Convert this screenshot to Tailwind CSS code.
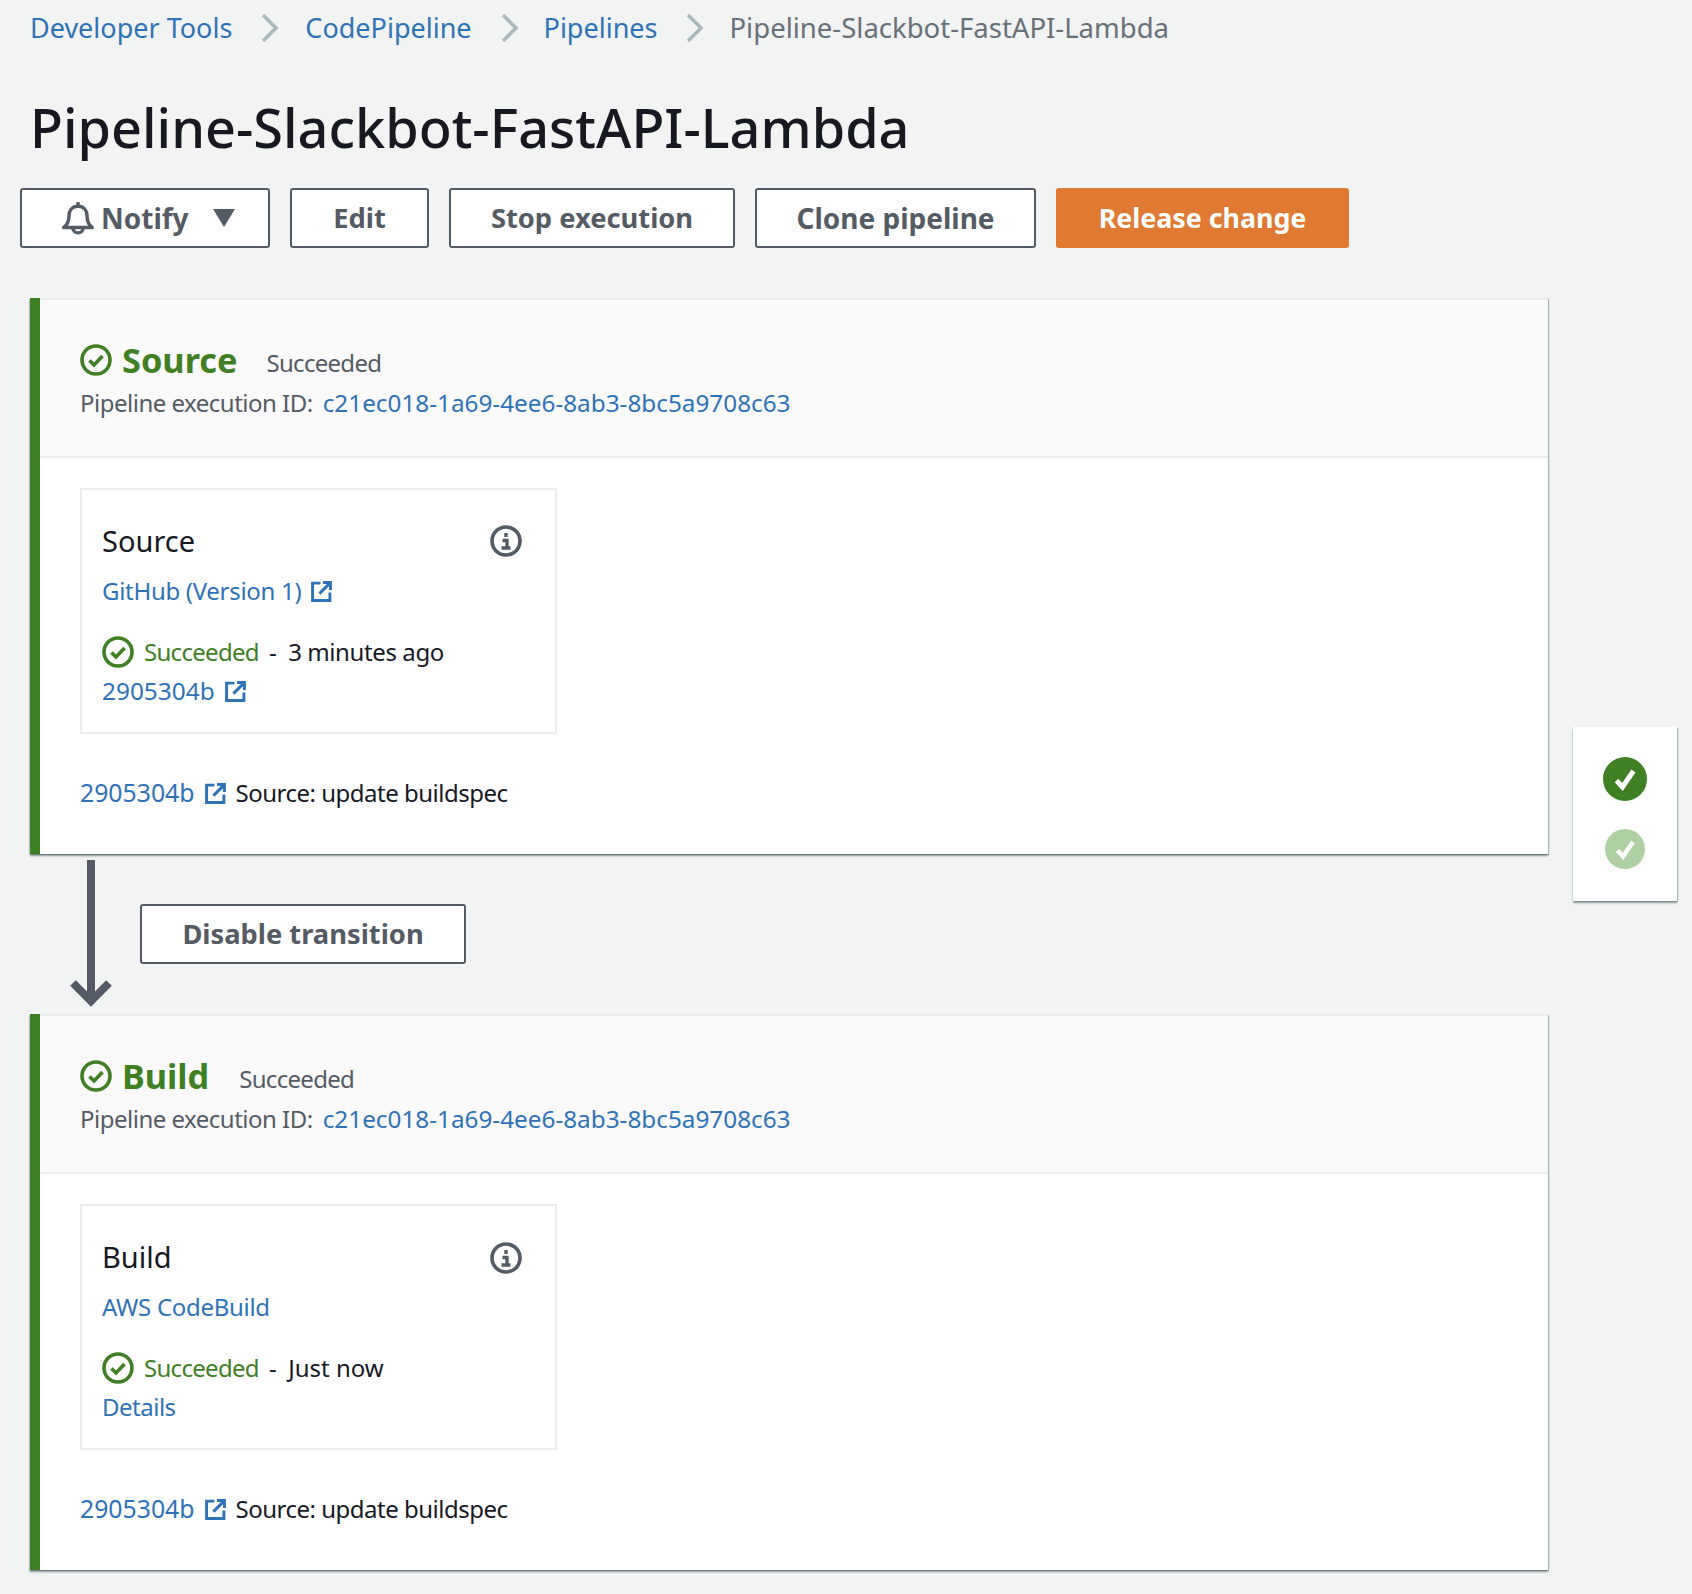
<!DOCTYPE html>
<html lang="en">
<head>
  <meta charset="UTF-8" />
  <title>Pipeline-Slackbot-FastAPI-Lambda</title>
  <script src="https://cdn.jsdelivr.net/npm/@tailwindcss/browser@4"></script>
</head>
<body class="bg-[#f2f3f3] font-['Noto_Sans',sans-serif] text-[#16191f]">
  <div class="w-[1692px] h-[1594px] overflow-hidden">
    <!-- breadcrumbs -->
    <nav class="h-14 pl-[30px] flex items-center text-[27px] text-[#2e73b8]">
      <a>Developer Tools</a>
      <svg class="ml-[29px] mr-[26px] w-[18px] h-[30px]" viewBox="0 0 18 30" fill="none" stroke="#aab7b8" stroke-width="3.5"><path d="M2 2l13 13L2 28"/></svg>
      <a>CodePipeline</a>
      <svg class="ml-[29px] mr-[25px] w-[18px] h-[30px]" viewBox="0 0 18 30" fill="none" stroke="#aab7b8" stroke-width="3.5"><path d="M2 2l13 13L2 28"/></svg>
      <a>Pipelines</a>
      <svg class="ml-[29px] mr-[25px] w-[18px] h-[30px]" viewBox="0 0 18 30" fill="none" stroke="#aab7b8" stroke-width="3.5"><path d="M2 2l13 13L2 28"/></svg>
      <span class="text-[27.5px] text-[#687078]">Pipeline-Slackbot-FastAPI-Lambda</span>
    </nav>

    <h1 class="mt-[36px] pl-[30px] h-[70px] leading-[70px] text-[54px] font-medium">Pipeline-Slackbot-FastAPI-Lambda</h1>

    <!-- actions -->
    <div class="mt-[26px] pl-5 flex gap-5 text-[27.3px] font-bold text-[#545b64]">
      <button class="w-[250px] h-[60px] bg-white border-2 border-[#545b64] rounded-[3px] flex items-center pl-[39px]">
        <svg class="w-[34px] h-[34px]" viewBox="0 0 32 32" fill="none" stroke="#545b64" stroke-width="3.2" stroke-linejoin="round"><path d="M2.5 25c4-3 5-7 5-11 0-5 3-9 8.500-9s8.500 4 8.500 9c0 4 1 8 5 11z"/><path d="M16 5V1"/><path d="M11 25a5 5 0 0 0 10 0"/></svg>
        <span class="ml-[6px] text-[28px]">Notify</span>
        <svg class="ml-[24px] w-[22px] h-[18px]" viewBox="0 0 22 18" fill="#545b64"><path d="M0 0h22L11 18z"/></svg>
      </button>
      <button class="w-[139px] h-[60px] bg-white border-2 border-[#545b64] rounded-[3px]">Edit</button>
      <button class="w-[286px] h-[60px] bg-white border-2 border-[#545b64] rounded-[3px]">Stop execution</button>
      <button class="w-[281px] h-[60px] bg-white border-2 border-[#545b64] rounded-[3px] text-[28px]">Clone pipeline</button>
      <button class="w-[293px] h-[60px] bg-[#e07a32] rounded-[3px] text-white text-[26.800px]">Release change</button>
    </div>

    <div class="mt-[50px] flex items-start">
      <div class="ml-[30px] w-[1518px]">
        <!-- source stage -->
        <section class="h-[556px] flex bg-white shadow-[0_2px_2px_0_rgba(0,28,36,0.4),1px_1px_1px_0_rgba(0,28,36,0.2),-1px_1px_1px_0_rgba(0,28,36,0.1)]">
          <div class="w-2.5 bg-[#3f8024]"></div>
          <div class="flex-1">
            <header class="h-[160px] pl-[40px] pt-[38px] bg-[#fafafa] border-t-2 border-b-2 border-[#eaeded] text-[24px] tracking-[-0.5px] text-[#545b64]">
              <div class="h-11 flex items-center">
                <svg class="w-8 h-8" viewBox="0 0 32 32" fill="none" stroke="#3f8024" stroke-width="3.6"><circle cx="16" cy="16" r="14"/><path d="M9.500 16.500l4.500 4.500 8.500-9"/></svg>
                <span class="ml-[10px] text-[34.3px] tracking-normal font-bold text-[#3f8024]">Source</span>
                <span class="ml-[29px] mt-[6px] tracking-[-0.7px]">Succeeded</span>
              </div>
              <div class="h-10 mt-px flex items-center">
                Pipeline execution ID:<a class="ml-[10px] text-[24.3px] tracking-normal text-[#2e73b8]">c21ec018-1a69-4ee6-8ab3-8bc5a9708c63</a>
              </div>
            </header>
            <div class="pl-[40px] pt-[30px] text-[24px] tracking-[-0.5px]">
              <div class="w-[477px] h-[246px] border-2 border-[#eaeded] pl-5 pr-[33px] pt-[31px]">
                <div class="h-10 flex items-center justify-between">
                  <span class="text-[29px] tracking-normal">Source</span>
                  <svg class="w-8 h-8" viewBox="0 0 32 32" fill="none" stroke="#545b64"><circle cx="16" cy="16" r="14" stroke-width="3.6"/><path d="M16 8v4M12.500 15.500H17V24M11.500 23h9" stroke-width="3.400"/></svg>
                </div>
                <div class="mt-[10px] h-10 flex items-center tracking-[-0.3px] text-[#2e73b8]">
                  GitHub (Version 1)
                  <svg class="ml-[10px] w-[21px] h-[21px]" viewBox="0 0 20 20" fill="none" stroke="#2e73b8" stroke-width="2.800"><path d="M9 2H1.500v16.500H18V11"/><path d="M8 12L18 2M11.500 1.500h7v7"/></svg>
                </div>
                <div class="mt-[21px] h-10 flex items-center">
                  <svg class="w-8 h-8" viewBox="0 0 32 32" fill="none" stroke="#3f8024" stroke-width="3.6"><circle cx="16" cy="16" r="14"/><path d="M9.500 16.500l4.500 4.500 8.500-9"/></svg>
                  <span class="ml-[10px] tracking-[-0.7px] text-[#3f8024]">Succeeded</span>
                  <span class="ml-[10px]">-</span>
                  <span class="ml-3 tracking-[-0.4px]">3 minutes ago</span>
                </div>
                <div class="h-[38px] flex items-center text-[24.4px] tracking-normal text-[#2e73b8]">
                  2905304b
                  <svg class="ml-[10px] w-[21px] h-[21px]" viewBox="0 0 20 20" fill="none" stroke="#2e73b8" stroke-width="2.800"><path d="M9 2H1.500v16.500H18V11"/><path d="M8 12L18 2M11.500 1.500h7v7"/></svg>
                </div>
              </div>
              <div class="mt-[39px] h-10 flex items-center">
                <a class="text-[24.8px] tracking-normal text-[#2e73b8]">2905304b</a>
                <svg class="ml-[10px] w-[21px] h-[21px]" viewBox="0 0 20 20" fill="none" stroke="#2e73b8" stroke-width="2.800"><path d="M9 2H1.500v16.500H18V11"/><path d="M8 12L18 2M11.500 1.500h7v7"/></svg>
                <span class="ml-[10px]">Source: update buildspec</span>
              </div>
            </div>
          </div>
        </section>

        <!-- transition -->
        <div class="h-[160px] flex items-start">
          <svg class="ml-10 mt-1.5 w-[42px] h-[148px]" viewBox="0 0 42 148" fill="none" stroke="#545b64" stroke-width="8"><path d="M21 0v142"/><path d="M3 123l18 18 18-18"/></svg>
          <button class="ml-7 mt-[50px] w-[326px] h-[60px] bg-white border-2 border-[#545b64] rounded-[3px] text-[27.3px] font-bold text-[#545b64]">Disable transition</button>
        </div>

        <!-- build stage -->
        <section class="h-[556px] flex bg-white shadow-[0_2px_2px_0_rgba(0,28,36,0.4),1px_1px_1px_0_rgba(0,28,36,0.2),-1px_1px_1px_0_rgba(0,28,36,0.1)]">
          <div class="w-2.5 bg-[#3f8024]"></div>
          <div class="flex-1">
            <header class="h-[160px] pl-[40px] pt-[38px] bg-[#fafafa] border-t-2 border-b-2 border-[#eaeded] text-[24px] tracking-[-0.5px] text-[#545b64]">
              <div class="h-11 flex items-center">
                <svg class="w-8 h-8" viewBox="0 0 32 32" fill="none" stroke="#3f8024" stroke-width="3.6"><circle cx="16" cy="16" r="14"/><path d="M9.500 16.500l4.500 4.500 8.500-9"/></svg>
                <span class="ml-[10px] text-[34.3px] tracking-normal font-bold text-[#3f8024]">Build</span>
                <span class="ml-[30px] mt-[6px] tracking-[-0.7px]">Succeeded</span>
              </div>
              <div class="h-10 mt-px flex items-center">
                Pipeline execution ID:<a class="ml-[10px] text-[24.3px] tracking-normal text-[#2e73b8]">c21ec018-1a69-4ee6-8ab3-8bc5a9708c63</a>
              </div>
            </header>
            <div class="pl-[40px] pt-[30px] text-[24px] tracking-[-0.5px]">
              <div class="w-[477px] h-[246px] border-2 border-[#eaeded] pl-5 pr-[33px] pt-[31px]">
                <div class="h-10 flex items-center justify-between">
                  <span class="text-[29px] tracking-normal">Build</span>
                  <svg class="w-8 h-8 mt-0.5" viewBox="0 0 32 32" fill="none" stroke="#545b64"><circle cx="16" cy="16" r="14" stroke-width="3.6"/><path d="M16 8v4M12.500 15.500H17V24M11.500 23h9" stroke-width="3.400"/></svg>
                </div>
                <div class="mt-[10px] h-10 flex items-center tracking-[-0.3px] text-[#2e73b8]">AWS CodeBuild</div>
                <div class="mt-[21px] h-10 flex items-center">
                  <svg class="w-8 h-8" viewBox="0 0 32 32" fill="none" stroke="#3f8024" stroke-width="3.6"><circle cx="16" cy="16" r="14"/><path d="M9.500 16.500l4.500 4.500 8.500-9"/></svg>
                  <span class="ml-[10px] tracking-[-0.7px] text-[#3f8024]">Succeeded</span>
                  <span class="ml-[10px]">-</span>
                  <span class="ml-3 tracking-normal">Just now</span>
                </div>
                <div class="h-[38px] flex items-center text-[#2e73b8]">Details</div>
              </div>
              <div class="mt-[39px] h-10 flex items-center">
                <a class="text-[24.8px] tracking-normal text-[#2e73b8]">2905304b</a>
                <svg class="ml-[10px] w-[21px] h-[21px]" viewBox="0 0 20 20" fill="none" stroke="#2e73b8" stroke-width="2.800"><path d="M9 2H1.500v16.500H18V11"/><path d="M8 12L18 2M11.500 1.500h7v7"/></svg>
                <span class="ml-[10px]">Source: update buildspec</span>
              </div>
            </div>
          </div>
        </section>
      </div>

      <!-- stage summary -->
      <aside class="ml-[25px] mt-[429px] w-[104px] h-[174px] bg-white flex flex-col items-center pt-[30px] shadow-[0_2px_2px_0_rgba(0,28,36,0.4),1px_1px_1px_0_rgba(0,28,36,0.2)]">
        <svg class="w-11 h-11" viewBox="0 0 44 44"><circle cx="22" cy="22" r="22" fill="#3f8024"/><path d="M13.500 23.500l6 6.500 11-16" fill="none" stroke="#fff" stroke-width="5"/></svg>
        <svg class="mt-[28px] w-10 h-10" viewBox="0 0 40 40"><circle cx="20" cy="20" r="20" fill="#afd0a2"/><path d="M12.500 21.500l5.500 6 10-14.500" fill="none" stroke="#fff" stroke-width="4.500"/></svg>
      </aside>
    </div>
  </div>
</body>
</html>
